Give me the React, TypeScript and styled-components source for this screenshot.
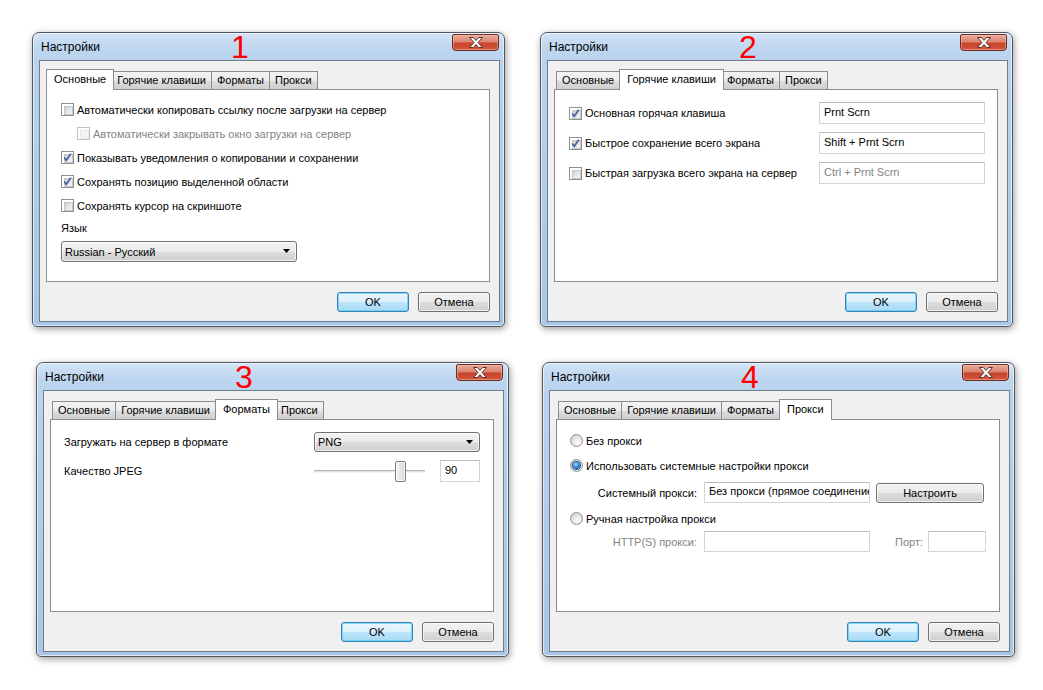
import { createGlobalStyle, styled } from "styled-components";

const GlobalStyle = createGlobalStyle`
  html, body {
    margin: 0;
    padding: 0;
    background: #ffffff;
  }
  body {
    font-family: "Liberation Sans", Arial, sans-serif;
    font-size: 11px;
    color: #000;
  }
  #root {
    width: 1043px;
    height: 690px;
    overflow: hidden;
  }
`;

const Page = styled.div`
  display: grid;
  grid-template-columns: 473px 473px;
  grid-template-rows: 295px 295px;
  column-gap: 35px;
  row-gap: 35px;
  padding: 32px 0 0 32px;
`;

/* ---------- window frame ---------- */

const Window = styled.section<{ $shift?: number }>`
  position: relative;
  box-sizing: border-box;
  width: 473px;
  height: 295px;
  margin-left: ${(p) => p.$shift ?? 0}px;
  display: flex;
  flex-direction: column;
  padding: 0 4px 4px 6px;
  border: 1px solid #4f5863;
  border-radius: 7px 7px 5px 5px;
  background: linear-gradient(
    to bottom,
    #d3e4f6 0px,
    #bfd7f0 14px,
    #b9d3ee 28px,
    #aecbea 60%,
    #a8c6e7 100%
  );
  box-shadow: inset 0 0 0 1px rgba(255, 255, 255, 0.6),
    1px 2px 7px rgba(0, 0, 0, 0.4);
`;

const TitleBar = styled.header`
  position: relative;
  height: 27px;
  display: flex;
  align-items: flex-start;
`;

const Title = styled.span`
  align-self: center;
  padding-left: 2px;
  font-size: 12px;
  color: #000;
`;

const Badge = styled.span`
  position: absolute;
  left: 186px;
  top: -2px;
  width: 30px;
  text-align: center;
  font-size: 32px;
  line-height: 32px;
  color: #f00;
`;

const CloseButton = styled.div`
  margin-left: auto;
  margin-top: 1px;
  margin-right: 1px;
  box-sizing: border-box;
  width: 47px;
  height: 17px;
  display: flex;
  align-items: center;
  justify-content: center;
  border: 1px solid #6a2b20;
  border-radius: 2px 2px 4px 4px;
  background: linear-gradient(
    to bottom,
    #e9a99a 0%,
    #dc8570 45%,
    #c8432c 55%,
    #d0573c 100%
  );
  box-shadow: inset 0 0 0 1px rgba(255, 200, 190, 0.45);
`;

const Client = styled.div`
  box-sizing: border-box;
  height: 262px;
  border: 1px solid #6f7d8d;
  background: #f0f0f0;
  padding: 8px 9px 0 6px;
  display: flex;
  flex-direction: column;
`;

/* ---------- tabs ---------- */

const TabStrip = styled.div`
  position: relative;
  z-index: 1;
  height: 20px;
  display: flex;
  align-items: flex-end;
  padding-left: 2px;
`;

const Tab = styled.div<{ $active?: boolean }>`
  box-sizing: border-box;
  height: ${(p) => (p.$active ? 21 : 18)}px;
  margin: ${(p) => (p.$active ? "0 -2px -1px -2px" : "0 0 0 0")};
  padding: ${(p) => (p.$active ? "0 7px" : "0 5px")};
  border: 1px solid #898c95;
  border-bottom: none;
  line-height: ${(p) => (p.$active ? 18 : 17)}px;
  white-space: nowrap;
  position: relative;
  z-index: ${(p) => (p.$active ? 2 : 1)};
  background: ${(p) =>
    p.$active
      ? "#ffffff"
      : "linear-gradient(to bottom, #f2f2f2 0%, #ebebeb 50%, #dddddd 51%, #cfcfcf 100%)"};
  & + & {
    margin-left: ${(p) => (p.$active ? "-2px" : "-1px")};
  }
`;

const Panel = styled.div`
  box-sizing: border-box;
  flex: 0 0 193px;
  border: 1px solid #898c95;
  background: #ffffff;
`;

const Footer = styled.div`
  display: flex;
  justify-content: flex-end;
  gap: 9px;
  margin-top: 10px;
`;

const Button = styled.div<{ $default?: boolean; $width?: number }>`
  box-sizing: border-box;
  width: ${(p) => p.$width ?? 72}px;
  height: 20px;
  display: flex;
  align-items: center;
  justify-content: center;
  border: 1px solid ${(p) => (p.$default ? "#3c7fb1" : "#707070")};
  border-radius: 3px;
  background: ${(p) =>
    p.$default
      ? "linear-gradient(to bottom, #eaf6fd 0%, #d9f0fc 50%, #bee6fd 51%, #a7d9f5 100%)"
      : "linear-gradient(to bottom, #f2f2f2 0%, #ebebeb 50%, #dddddd 51%, #cfcfcf 100%)"};
  box-shadow: inset 0 0 0 1px
    ${(p) => (p.$default ? "rgba(94, 206, 245, 0.75)" : "rgba(255, 255, 255, 0.7)")};
`;

/* ---------- controls ---------- */

const Text = styled.span<{ $disabled?: boolean }>`
  white-space: nowrap;
  color: ${(p) => (p.$disabled ? "#838383" : "#000")};
`;

const CheckRow = styled.div<{ $indent?: number; $height?: number }>`
  display: flex;
  align-items: center;
  gap: 3px;
  height: ${(p) => p.$height ?? 17}px;
  padding-left: ${(p) => p.$indent ?? 0}px;
`;

const Box = styled.span<{ $disabled?: boolean }>`
  box-sizing: border-box;
  flex: 0 0 13px;
  width: 13px;
  height: 13px;
  padding: 2px;
  border: 1px solid ${(p) => (p.$disabled ? "#c2c2c2" : "#8e8f8f")};
  background: #fff;
  position: relative;
  &::before {
    content: "";
    display: block;
    width: 7px;
    height: 7px;
    border: 1px solid ${(p) => (p.$disabled ? "#e6e6e6" : "#c6c9cf")};
    background: ${(p) =>
      p.$disabled
        ? "#f4f4f4"
        : "linear-gradient(135deg, #cbcfd5 0%, #e4e6e9 50%, #f6f6f6 100%)"};
  }
  svg {
    position: absolute;
    left: 0;
    top: 0;
  }
`;

function CheckBox({ checked, disabled }: { checked?: boolean; disabled?: boolean }) {
  return (
    <Box $disabled={disabled}>
      {checked && (
        <svg width="11" height="11" viewBox="0 0 11 11">
          <path
            d="M2.2 5.6 L4.3 8.3 L8.8 1.8"
            fill="none"
            stroke="#4a5f97"
            strokeWidth="1.7"
          />
        </svg>
      )}
    </Box>
  );
}

const Radio = styled.span<{ $checked?: boolean }>`
  box-sizing: border-box;
  flex: 0 0 13px;
  width: 13px;
  height: 13px;
  border-radius: 50%;
  border: 1px solid #8e8f8f;
  background: radial-gradient(circle at 65% 70%, #ffffff 0%, #e6e6e6 45%, #c9c9c9 100%);
  display: flex;
  align-items: center;
  justify-content: center;
  &::after {
    content: "";
    display: ${(p) => (p.$checked ? "block" : "none")};
    width: 7px;
    height: 7px;
    border-radius: 50%;
    background: radial-gradient(circle at 40% 35%, #a6dcfb 0%, #3d8ad4 45%, #0f3f8d 100%);
    box-shadow: 0 0 0 1px #1d4f94;
  }
`;

const Combo = styled.div<{ $width: number; $height: number }>`
  box-sizing: border-box;
  width: ${(p) => p.$width}px;
  height: ${(p) => p.$height}px;
  display: flex;
  align-items: center;
  padding: 0 5px 0 3px;
  border: 1px solid #707070;
  border-radius: 3px;
  background: linear-gradient(to bottom, #f2f2f2 0%, #ebebeb 50%, #dddddd 51%, #cfcfcf 100%);
  box-shadow: inset 0 0 0 1px rgba(255, 255, 255, 0.7);
  svg {
    margin-left: auto;
  }
`;

const ComboArrow = () => (
  <svg width="8" height="5" viewBox="0 0 8 5">
    <path d="M0 0 H7 L3.5 4 Z" fill="#000" />
  </svg>
);

const Field = styled.div<{ $width?: number; $height?: number; $disabled?: boolean }>`
  box-sizing: border-box;
  width: ${(p) => (p.$width ? `${p.$width}px` : "100%")};
  height: ${(p) => p.$height ?? 22}px;
  padding: 0 4px;
  border: 1px solid #d1d5dc;
  border-top-color: #b8bcc4;
  background: #fff;
  line-height: ${(p) => (p.$height ?? 22) - 4}px;
  white-space: nowrap;
  overflow: hidden;
  color: ${(p) => (p.$disabled ? "#838383" : "#000")};
`;

/* ---------- page bodies ---------- */

const GeneralBody = styled.div`
  display: flex;
  flex-direction: column;
  padding: 11px 14px 0 14px;
`;

const CheckList = styled.div`
  display: flex;
  flex-direction: column;
  gap: 7px;
`;

const LangField = styled.div`
  display: flex;
  flex-direction: column;
  gap: 4px;
  margin-top: 6px;
`;

const FieldLabel = styled.div`
  height: 17px;
  line-height: 17px;
`;

const FormGrid = styled.div<{ $pad: string }>`
  display: grid;
  grid-template-columns: 1fr 166px;
  row-gap: 8px;
  align-items: center;
  padding: ${(p) => p.$pad};
`;

const SliderRow = styled.div`
  display: flex;
  align-items: center;
  height: 22px;
`;

const Slider = styled.div`
  position: relative;
  width: 111px;
  height: 22px;
  display: flex;
  align-items: center;
`;

const Track = styled.div`
  box-sizing: border-box;
  width: 100%;
  height: 3px;
  border-top: 1px solid #b5b5b5;
  border-bottom: 1px solid #f4f4f4;
  background: #e3e3e3;
`;

const Thumb = styled.div`
  position: absolute;
  top: 1px;
  box-sizing: border-box;
  width: 11px;
  height: 21px;
  border: 1px solid #7a7a7a;
  border-radius: 2px;
  background: linear-gradient(to right, #f6f6f6 0%, #e6e6e6 50%, #d6d6d6 100%);
  box-shadow: inset 0 0 0 1px rgba(255, 255, 255, 0.8);
`;

const ProxyBody = styled.div`
  display: flex;
  flex-direction: column;
  gap: 8px;
  padding: 12px 13px 0 13px;
`;

const SubRow = styled.div<{ $shiftY?: number }>`
  display: grid;
  grid-template-columns: 1fr 166px 110px;
  column-gap: 6px;
  align-items: center;
  height: 21px;
  margin-top: ${(p) => p.$shiftY ?? 0}px;
`;

const SubLabel = styled(Text)`
  text-align: right;
  padding-right: 1px;
`;

const PortGroup = styled.div`
  display: flex;
  align-items: center;
  justify-content: flex-end;
  gap: 5px;
`;

/* ---------- dialog ---------- */

const TAB_NAMES = ["Основные", "Горячие клавиши", "Форматы", "Прокси"];

function Dialog({
  number,
  active,
  shift,
  children,
}: {
  number: number;
  active: number;
  shift?: number;
  children: React.ReactNode;
}) {
  return (
    <Window $shift={shift}>
      <TitleBar>
        <Title>Настройки</Title>
        <Badge>{number}</Badge>
        <CloseButton>
          <svg width="14" height="11" viewBox="0 0 14 11">
            <path
              d="M0.5 0.5 H4.3 L7 3.4 L9.7 0.5 H13.5 L9 5.5 L13.5 10.5 H9.7 L7 7.6 L4.3 10.5 H0.5 L5 5.5 Z"
              fill="#fff"
              stroke="#5a3630"
              strokeWidth="1"
              strokeLinejoin="round"
            />
          </svg>
        </CloseButton>
      </TitleBar>
      <Client>
        <TabStrip>
          {TAB_NAMES.map((name, i) => (
            <Tab key={name} $active={i === active}>
              {name}
            </Tab>
          ))}
        </TabStrip>
        <Panel>{children}</Panel>
        <Footer>
          <Button $default>OK</Button>
          <Button>Отмена</Button>
        </Footer>
      </Client>
    </Window>
  );
}

export default function App() {
  return (
    <>
      <GlobalStyle />
      <Page>
        <Dialog number={1} active={0}>
          <GeneralBody>
            <CheckList>
              <CheckRow>
                <CheckBox />
                <Text>Автоматически копировать ссылку после загрузки на сервер</Text>
              </CheckRow>
              <CheckRow $indent={16}>
                <CheckBox disabled />
                <Text $disabled>Автоматически закрывать окно загрузки на сервер</Text>
              </CheckRow>
              <CheckRow>
                <CheckBox checked />
                <Text>Показывать уведомления о копировании и сохранении</Text>
              </CheckRow>
              <CheckRow>
                <CheckBox checked />
                <Text>Сохранять позицию выделенной области</Text>
              </CheckRow>
              <CheckRow>
                <CheckBox />
                <Text>Сохранять курсор на скриншоте</Text>
              </CheckRow>
            </CheckList>
            <LangField>
              <FieldLabel>Язык</FieldLabel>
              <Combo $width={236} $height={21}>
                Russian - Русский
                <ComboArrow />
              </Combo>
            </LangField>
          </GeneralBody>
        </Dialog>

        <Dialog number={2} active={1}>
          <FormGrid $pad="12px 12px 0 14px">
            <CheckRow $height={22}>
              <CheckBox checked />
              <Text>Основная горячая клавиша</Text>
            </CheckRow>
            <Field>Prnt Scrn</Field>
            <CheckRow $height={22}>
              <CheckBox checked />
              <Text>Быстрое сохранение всего экрана</Text>
            </CheckRow>
            <Field>Shift + Prnt Scrn</Field>
            <CheckRow $height={22}>
              <CheckBox />
              <Text>Быстрая загрузка всего экрана на сервер</Text>
            </CheckRow>
            <Field $disabled>Ctrl + Prnt Scrn</Field>
          </FormGrid>
        </Dialog>

        <Dialog number={3} active={2} shift={4}>
          <FormGrid $pad="12px 13px 0 13px">
            <Text>Загружать на сервер в формате</Text>
            <Combo $width={166} $height={20}>
              PNG
              <ComboArrow />
            </Combo>
            <Text>Качество JPEG</Text>
            <SliderRow>
              <Slider>
                <Track />
                <Thumb style={{ left: `${Math.round((90 / 100) * 90)}px` }} />
              </Slider>
              <Field $width={40} style={{ marginLeft: "auto" }}>
                90
              </Field>
            </SliderRow>
          </FormGrid>
        </Dialog>

        <Dialog number={4} active={3} shift={2}>
          <ProxyBody>
            <CheckRow>
              <Radio />
              <Text>Без прокси</Text>
            </CheckRow>
            <CheckRow>
              <Radio $checked />
              <Text>Использовать системные настройки прокси</Text>
            </CheckRow>
            <SubRow>
              <SubLabel>Системный прокси:</SubLabel>
              <Field $height={21}>Без прокси (прямое соединение</Field>
              <Button $width={108}>Настроить</Button>
            </SubRow>
            <CheckRow style={{ marginTop: -1 }}>
              <Radio />
              <Text>Ручная настройка прокси</Text>
            </CheckRow>
            <SubRow $shiftY={-4}>
              <SubLabel $disabled>HTTP(S) прокси:</SubLabel>
              <Field $height={21} />
              <PortGroup>
                <Text $disabled>Порт:</Text>
                <Field $height={21} $width={58} />
              </PortGroup>
            </SubRow>
          </ProxyBody>
        </Dialog>
      </Page>
    </>
  );
}
